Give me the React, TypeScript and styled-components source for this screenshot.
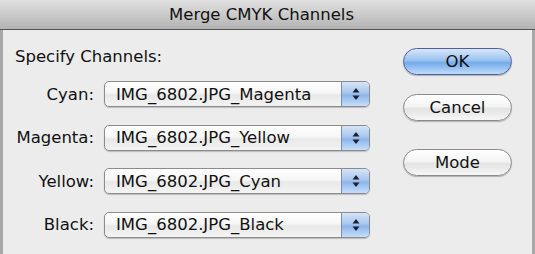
import React from "react";
import styled, { createGlobalStyle } from "styled-components";

const Global = createGlobalStyle`
  html, body { margin: 0; padding: 0; background: #ececec; }
  body { font-family: "DejaVu Sans", "Liberation Sans", sans-serif; }
`;

const Window = styled.div`
  width: 535px;
  height: 254px;
  display: flex;
  flex-direction: column;
  background: #ececec;
  overflow: hidden;
`;

const TitleBar = styled.div`
  height: 29px;
  padding-right: 12px;
  border-bottom: 1px solid #555;
  background: linear-gradient(#e0e0e0, #c6c6c6 60%, #b2b2b2);
  display: flex;
  align-items: center;
  justify-content: center;
  font-size: 16.5px;
  color: #111;
`;

const Body = styled.div`
  flex: 1;
  display: flex;
  border-left: 3px solid #a8a8a8;
  border-right: 3px solid #a8a8a8;
  background: #ececec;
  padding: 0 0 0 12px;
`;

const Left = styled.div`
  width: 358px;
  display: flex;
  flex-direction: column;
`;

const Heading = styled.div`
  margin-top: 17px;
  height: 20px;
  line-height: 20px;
  font-size: 16.5px;
  color: #111;
`;

const Rows = styled.div`
  margin-top: 14px;
  display: grid;
  grid-template-columns: 79px 266px;
  column-gap: 10px;
  row-gap: 17.5px;
  align-items: center;
`;

const Label = styled.div`
  text-align: right;
  font-size: 16.5px;
  color: #111;
  white-space: nowrap;
`;

const Popup = styled.div`
  height: 24px;
  border: 1px solid #8c8c8c;
  border-radius: 5px;
  background: linear-gradient(#ffffff, #f6f6f6 45%, #e8e8e8 55%, #f4f4f4);
  box-shadow: 0 1px 1px rgba(0, 0, 0, 0.2);
  display: flex;
  align-items: center;
  overflow: hidden;
`;

const PopupText = styled.div`
  flex: 1;
  padding-left: 11px;
  font-size: 16.5px;
  color: #111;
  white-space: nowrap;
`;

const Stepper = styled.div`
  width: 27px;
  height: 100%;
  border-left: 1px solid #7a8cb8;
  background: linear-gradient(#d6e4f6, #a9c6ee 45%, #8db5ea 55%, #c6defa);
  display: flex;
  align-items: center;
  justify-content: center;
`;

const Right = styled.div`
  margin-left: 30px;
  padding-top: 18px;
  display: flex;
  flex-direction: column;
  align-items: stretch;
  width: 109px;
`;

const Button = styled.div<{ $default?: boolean; $mt: number }>`
  margin-top: ${(p) => p.$mt}px;
  height: 25px;
  border-radius: 14px;
  border: 1px solid ${(p) => (p.$default ? "#4f5f9e" : "#8a8a8a")};
  background: ${(p) =>
    p.$default
      ? "linear-gradient(#d6e6fa, #9cc3ef 45%, #74aaeb 55%, #bfdcfb)"
      : "linear-gradient(#ffffff, #f4f4f4 45%, #e3e3e3 55%, #f6f6f6)"};
  box-shadow: 0 1px 1px rgba(0, 0, 0, 0.25);
  display: flex;
  align-items: center;
  justify-content: center;
  font-size: 16.5px;
  color: #111;
`;

const Arrows = () => (
  <svg width="8" height="14" viewBox="0 0 8 14">
    <path d="M4 1 L7.5 5.5 L0.5 5.5 Z" fill="#1a2030" />
    <path d="M4 13 L7.5 8.5 L0.5 8.5 Z" fill="#1a2030" />
  </svg>
);

const rows = [
  ["Cyan:", "IMG_6802.JPG_Magenta"],
  ["Magenta:", "IMG_6802.JPG_Yellow"],
  ["Yellow:", "IMG_6802.JPG_Cyan"],
  ["Black:", "IMG_6802.JPG_Black"],
];

export default function App() {
  return (
    <Window>
      <Global />
      <TitleBar>Merge CMYK Channels</TitleBar>
      <Body>
        <Left>
          <Heading>Specify Channels:</Heading>
          <Rows>
            {rows.map(([l, v]) => (
              <React.Fragment key={l}>
                <Label>{l}</Label>
                <Popup>
                  <PopupText>{v}</PopupText>
                  <Stepper>
                    <Arrows />
                  </Stepper>
                </Popup>
              </React.Fragment>
            ))}
          </Rows>
        </Left>
        <Right>
          <Button $default $mt={0}>OK</Button>
          <Button $mt={19}>Cancel</Button>
          <Button $mt={28}>Mode</Button>
        </Right>
      </Body>
    </Window>
  );
}
